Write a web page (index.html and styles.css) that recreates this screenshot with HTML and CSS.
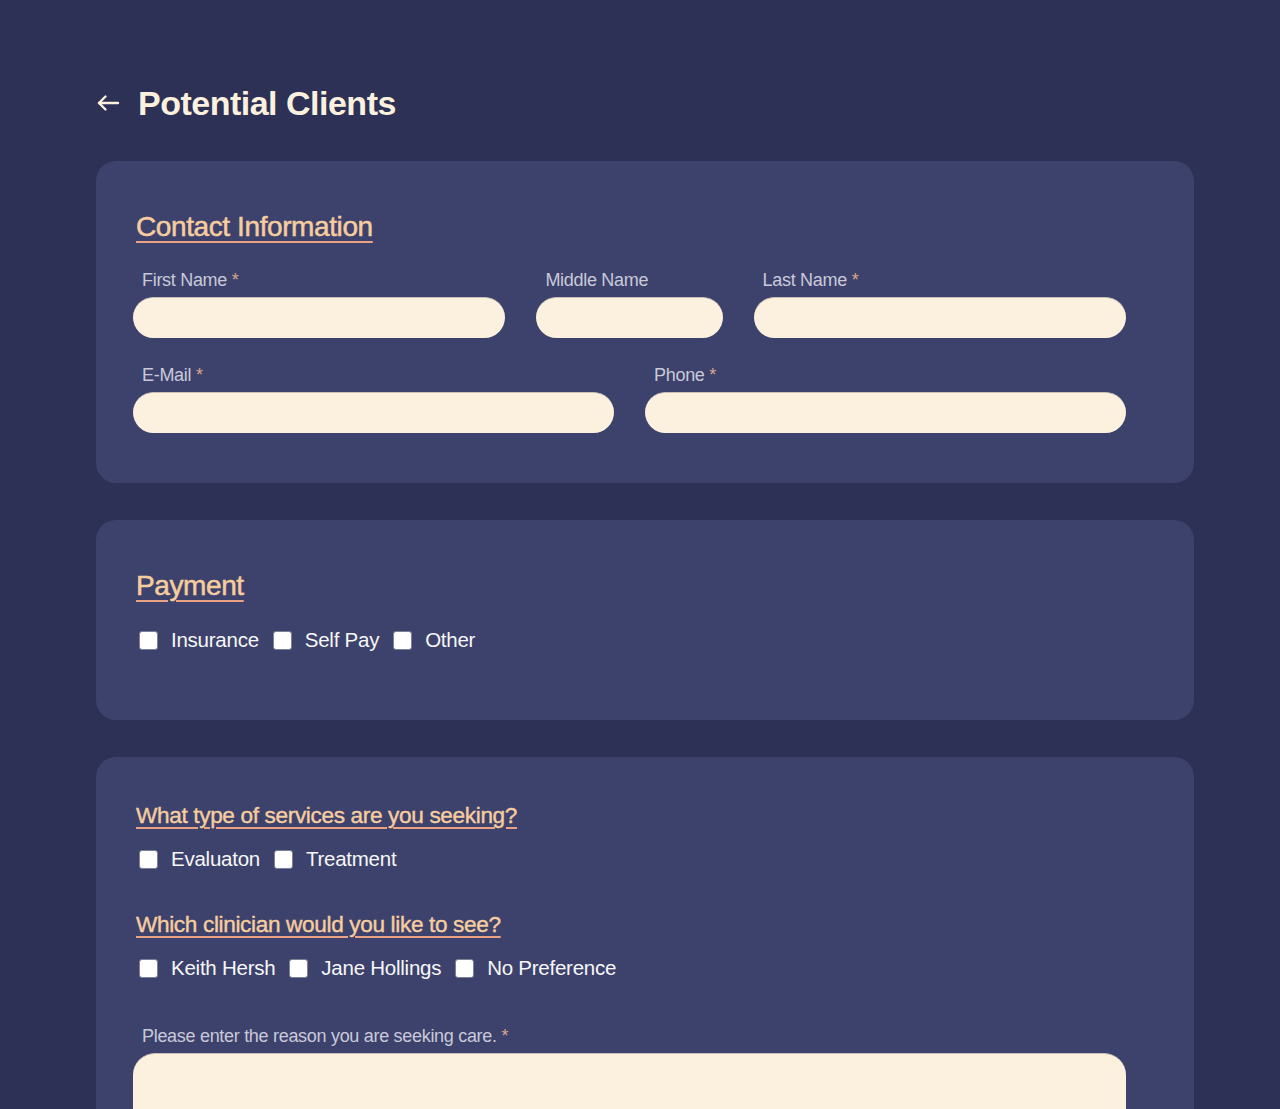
FILE: index.html
```html
<!DOCTYPE html>
<html lang="en">
<head>
<meta charset="utf-8">
<title>Potential Clients</title>
<link rel="stylesheet" href="styles.css">
</head>
<body>
<div class="page">
  <header class="page-header">
    <a class="back" href="#" aria-label="Back">
      <svg width="24" height="24" viewBox="0 0 24 24" fill="none" stroke="currentColor" stroke-width="2.4" stroke-linecap="round" stroke-linejoin="round"><path d="M22 12H3"/><path d="M9.5 5.5L3 12l6.5 6.5"/></svg>
    </a>
    <h1 class="title">Potential Clients</h1>
  </header>

  <section class="card card-contact">
    <h2 class="heading">Contact Information</h2>
    <div class="row row-names">
      <label class="field"><span class="label">First Name <span class="req">*</span></span><input class="input" type="text"></label>
      <label class="field"><span class="label">Middle Name</span><input class="input" type="text"></label>
      <label class="field"><span class="label">Last Name <span class="req">*</span></span><input class="input" type="text"></label>
    </div>
    <div class="row row-contact">
      <label class="field"><span class="label">E-Mail <span class="req">*</span></span><input class="input" type="email"></label>
      <label class="field"><span class="label">Phone <span class="req">*</span></span><input class="input" type="tel"></label>
    </div>
  </section>

  <section class="card card-payment">
    <h2 class="heading">Payment</h2>
    <div class="checks">
      <label class="check"><input type="checkbox" class="box"><span>Insurance</span></label>
      <label class="check"><input type="checkbox" class="box"><span>Self Pay</span></label>
      <label class="check"><input type="checkbox" class="box"><span>Other</span></label>
    </div>
  </section>

  <section class="card card-services">
    <h2 class="heading heading-sm">What type of services are you seeking?</h2>
    <div class="checks checks-sm">
      <label class="check"><input type="checkbox" class="box"><span>Evaluaton</span></label>
      <label class="check"><input type="checkbox" class="box"><span>Treatment</span></label>
    </div>
    <h2 class="heading heading-sm heading-gap">Which clinician would you like to see?</h2>
    <div class="checks checks-sm">
      <label class="check"><input type="checkbox" class="box"><span>Keith Hersh</span></label>
      <label class="check"><input type="checkbox" class="box"><span>Jane Hollings</span></label>
      <label class="check"><input type="checkbox" class="box"><span>No Preference</span></label>
    </div>
    <label class="field field-reason"><span class="label">Please enter the reason you are seeking care. <span class="req">*</span></span><textarea class="textarea"></textarea></label>
  </section>
</div>
</body>
</html>
```

FILE: styles.css
```css
* { box-sizing: border-box; }

html, body {
  margin: 0;
  padding: 0;
  background: #2c3155;
}

body {
  font-family: "Liberation Sans", Arial, Helvetica, sans-serif;
  color: #fcf0de;
}

.page {
  padding: 83px 86px 40px 96px;
}

.page-header {
  display: flex;
  align-items: center;
  gap: 18px;
  height: 40px;
}

.back {
  display: flex;
  color: #fcf0de;
  width: 24px;
  height: 24px;
}

.title {
  margin: 0;
  font-size: 34px;
  line-height: 40px;
  font-weight: 700;
  letter-spacing: -0.5px;
  color: #fcf0de;
}

.card {
  background: #3d426c;
  border-radius: 20px;
  margin-top: 37px;
  padding: 49px 68px 50px 37px;
}

.page-header + .card {
  margin-top: 38px;
}

.card-payment {
  padding-bottom: 68px;
}

.card-services {
  padding-top: 45px;
  padding-bottom: 0;
  height: 380px;
}

.heading {
  margin: 0 0 0 3px;
  display: inline-block;
  font-size: 28px;
  line-height: 34px;
  font-weight: 400;
  letter-spacing: -0.4px;
  color: #f6cd9f;
  text-decoration: underline;
  text-decoration-color: #e9a283;
  text-decoration-thickness: 2px;
  text-underline-offset: 5px;
  -webkit-text-stroke: 0.5px #f6cd9f;
}

.heading-sm {
  font-size: 22.6px;
  line-height: 27px;
  letter-spacing: -0.35px;
  text-underline-offset: 4px;
  -webkit-text-stroke: 0.4px #f6cd9f;
}

.heading-gap {
  margin-top: 40px;
}

.row {
  display: grid;
  gap: 31px;
  margin-top: 25px;
}

.row-contact {
  margin-top: 26px;
}

.row-names {
  grid-template-columns: 2fr 1fr 2fr;
}

.row-contact {
  grid-template-columns: 1fr 1fr;
}

.field {
  display: flex;
  flex-direction: column;
  gap: 6px;
}

.label {
  padding-left: 9px;
  font-size: 18px;
  line-height: 22px;
  color: #c9c9da;
  letter-spacing: -0.3px;
}

.req {
  color: #d7a58c;
}

.input {
  display: block;
  width: 100%;
  height: 41px;
  border: none;
  border-top: 1px solid #c9bfb4;
  border-radius: 21px;
  background: #fcf0de;
  outline: none;
  font: inherit;
  padding: 0 18px;
}

.checks {
  display: flex;
  align-items: center;
  margin-top: 25px;
  padding-left: 6px;
  gap: 14px;
}

.checks-sm {
  margin-top: 18px;
}

.check {
  display: flex;
  align-items: center;
  gap: 13px;
  font-size: 20.5px;
  line-height: 24px;
  color: #f7f7f7;
  letter-spacing: -0.25px;
}

.box {
  appearance: none;
  -webkit-appearance: none;
  margin: 0;
  width: 19px;
  height: 19px;
  background: #ffffff;
  border: 1px solid #7d7f92;
  border-radius: 3px;
}

.field-reason {
  margin-top: 45px;
}

.textarea {
  display: block;
  width: 100%;
  height: 160px;
  border: none;
  border-top: 1px solid #c9bfb4;
  border-radius: 22px;
  background: #fcf0de;
  resize: none;
  outline: none;
  font: inherit;
}
```
